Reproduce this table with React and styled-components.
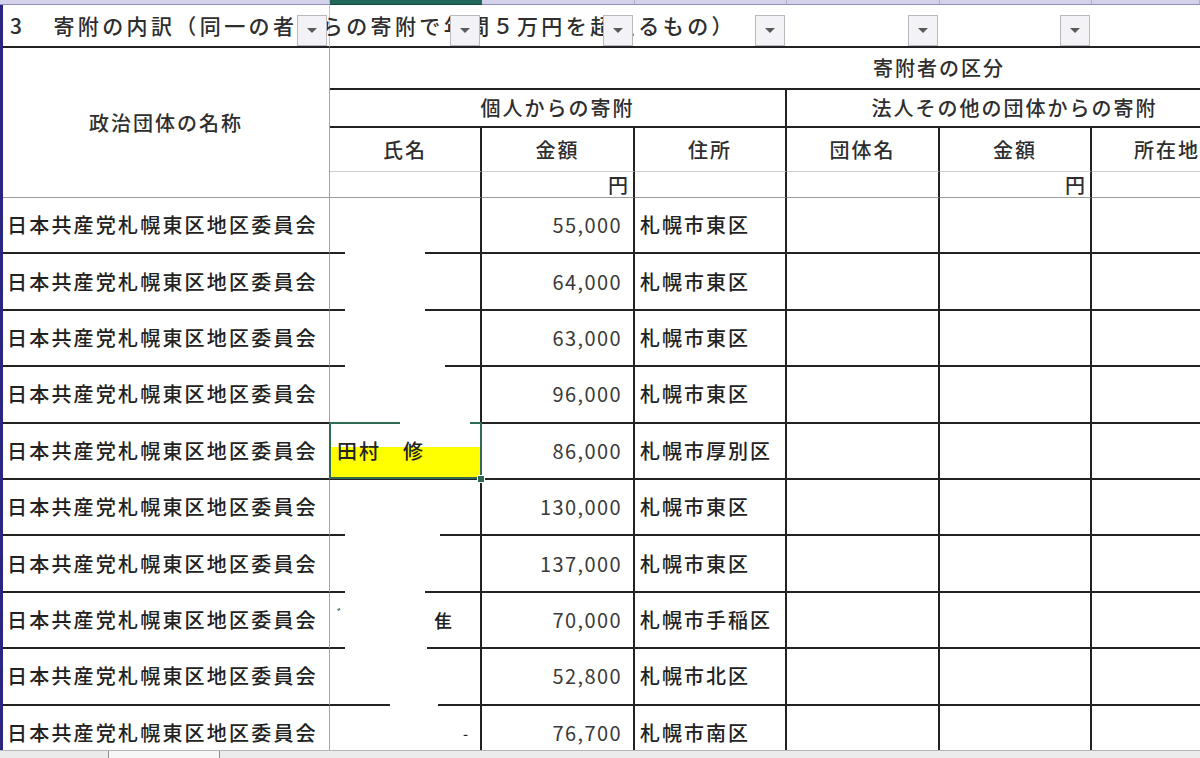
import styled, { createGlobalStyle } from "styled-components";

const GlobalStyle = createGlobalStyle`
  html, body { margin: 0; padding: 0; background: #fff; overflow: hidden; }
  body { font-family: "Noto Sans CJK JP", "Noto Sans", sans-serif; color: #2a2a2a; }
`;

// column widths (first one sits after the 3px frame line)
const COLS = [327, 152, 153, 152, 153, 152, 152, 152, 152];
const STRIP = [330, 152, 153, 152, 153, 152, 108];

const rows = [
  { amt: "55,000", addr: "札幌市東区", erase: [15, 80] },
  { amt: "64,000", addr: "札幌市東区", erase: [15, 80] },
  { amt: "63,000", addr: "札幌市東区", erase: [15, 100] },
  { amt: "96,000", addr: "札幌市東区" },
  { amt: "86,000", addr: "札幌市厚別区", selected: true, name: "田村　修" },
  { amt: "130,000", addr: "札幌市東区", erase: [15, 95] },
  { amt: "137,000", addr: "札幌市東区", erase: [15, 80] },
  { amt: "70,000", addr: "札幌市手稲区", erase: [15, 82], frag: true },
  { amt: "52,800", addr: "札幌市北区", erase: [60, 48] },
  { amt: "76,700", addr: "札幌市南区", dash: true },
];

export default function App() {
  return (
    <>
      <GlobalStyle />
      <Page>
        <ColStrip>
          {STRIP.map((w, i) => (
            <StripCell key={i} $w={w} $active={i === 1} />
          ))}
        </ColStrip>
        <Sheet>
          <Grid>
            <colgroup>
              {COLS.map((w, i) => (
                <col key={i} style={{ width: w }} />
              ))}
            </colgroup>
            <tbody>
              <tr style={{ height: 43 }}>
                <TitleCell>
                  <TitleText>
                    <Num>3</Num>寄附の内訳（同一の者からの寄附で年間５万円を超えるもの）
                  </TitleText>
                  <Filter />
                </TitleCell>
                {[0, 1, 2, 3, 4].map((i) => (
                  <FilterCell key={i}>
                    <Filter />
                  </FilterCell>
                ))}
                <FilterCell />
                <FilterCell />
                <FilterCell />
              </tr>

              <tr style={{ height: 42 }}>
                <Head rowSpan={4} $rb="1px solid #a4a4a4" $bb="1px solid #9c9c9c">
                  政治団体の名称
                </Head>
                <Head colSpan={8} $rb="none" $bb="2px solid #222">
                  寄附者の区分
                </Head>
              </tr>
              <tr style={{ height: 38 }}>
                <Head colSpan={3} $bb="2px solid #222">個人からの寄附</Head>
                <Head colSpan={3} $bb="2px solid #222">法人その他の団体からの寄附</Head>
                <Head colSpan={2} $rb="none" $bb="2px solid #222" />
              </tr>
              <tr style={{ height: 44 }}>
                {["氏名", "金額", "住所", "団体名", "金額", "所在地", "", ""].map((t, i) => (
                  <Head key={i} $bb="1px solid #cfcfcf">{t}</Head>
                ))}
              </tr>
              <tr style={{ height: 26 }}>
                {["", "円", "", "", "円", "", "", ""].map((t, i) => (
                  <Unit key={i}>{t}</Unit>
                ))}
              </tr>

              {rows.map((r, i) => (
                <tr key={i} style={{ height: 56.4 }}>
                  <OrgCell>日本共産党札幌東区地区委員会</OrgCell>
                  <NameCell $selected={r.selected}>
                    {r.name}
                    {r.frag && (
                      <FragRow>
                        <Tick>ﾞ</Tick>
                        <span>隹</span>
                      </FragRow>
                    )}
                    {r.dash && <Dash>-</Dash>}
                    {r.erase && <Erase $x={r.erase[0]} $w={r.erase[1]} $y={52} $h={7} />}
                    {r.selected && (
                      <>
                        <Erase $x={70} $w={70} $y={-3} $h={5} />
                        <Handle />
                      </>
                    )}
                  </NameCell>
                  <Amount>{r.amt}</Amount>
                  <Addr>{r.addr}</Addr>
                  <Blank />
                  <Blank />
                  <Blank />
                  <Blank />
                  <Blank />
                </tr>
              ))}
            </tbody>
          </Grid>
        </Sheet>
        <BottomBar>
          <Tab $w={108} />
          <TabGap />
          <TabRest />
        </BottomBar>
      </Page>
    </>
  );
}

const Page = styled.div`
  width: 1200px;
  height: 758px;
  display: flex;
  flex-direction: column;
  overflow: hidden;
`;

const ColStrip = styled.div`
  display: flex;
  height: 5px;
  flex: none;
`;

const StripCell = styled.div`
  flex: 0 0 ${(p) => p.$w}px;
  box-sizing: border-box;
  background: ${(p) => (p.$active ? "#21675a" : "#d4d2ea")};
  border-right: 1px solid ${(p) => (p.$active ? "#21675a" : "#aeacd2")};
  border-bottom: 1px solid ${(p) => (p.$active ? "#16463c" : "#8f8dbd")};
`;

const Sheet = styled.div`
  flex: 1;
  overflow: hidden;
  border-left: 3px solid #2a2680;
`;

const Grid = styled.table`
  border-collapse: separate;
  border-spacing: 0;
  table-layout: fixed;
  width: ${COLS.reduce((a, b) => a + b, 0)}px;
  font-size: 20px;
  font-weight: 500;
  line-height: 22px;
  letter-spacing: 2px;

  td {
    padding: 0;
    box-sizing: border-box;
    white-space: nowrap;
  }
`;

const TitleCell = styled.td`
  position: relative;
  overflow: visible;
  border-right: 1px solid #c4c4c4;
  border-bottom: 2px solid #222;
  vertical-align: middle;
`;

const TitleText = styled.span`
  position: relative;
  z-index: 1;
  display: inline-block;
  padding-left: 7px;
  font-size: 21px;
  letter-spacing: 3.4px;
  color: #2e2e2e;
`;

const Num = styled.span`
  margin-right: 28px;
`;

const FilterCell = styled.td`
  position: relative;
  border-bottom: 2px solid #222;
`;

const Filter = styled.div`
  position: absolute;
  z-index: 2;
  right: 2px;
  top: 10px;
  width: 30px;
  height: 31px;
  box-sizing: border-box;
  border: 1px solid #b9b9c2;
  background: #f3f3f7;

  &::after {
    content: "";
    position: absolute;
    left: 9px;
    top: 12px;
    border-left: 5px solid transparent;
    border-right: 5px solid transparent;
    border-top: 5px solid #5a5a5a;
  }
`;

const Head = styled.td`
  text-align: center;
  vertical-align: middle;
  overflow: hidden;
  color: #2e2e2e;
  border-right: ${(p) => p.$rb || "2px solid #222"};
  border-bottom: ${(p) => p.$bb || "none"};
`;

const Unit = styled.td`
  text-align: right;
  vertical-align: middle;
  padding-right: 3px !important;
  color: #2e2e2e;
  border-right: 2px solid #222;
  border-bottom: 1px solid #9c9c9c;
`;

const OrgCell = styled.td`
  padding-left: 4px !important;
  vertical-align: middle;
  overflow: hidden;
  color: #222;
  letter-spacing: 2.2px;
  border-right: 1px solid #a4a4a4;
  border-bottom: 2px solid #222;
`;

const NameCell = styled.td`
  position: relative;
  vertical-align: middle;
  padding-left: 7px !important;
  color: #222;
  border-right: 2px solid #222;
  border-bottom: 2px solid #222;
  background: ${(p) =>
    p.$selected ? "linear-gradient(#fff 0 23px, #ffff00 23px)" : "transparent"};

  ${(p) =>
    p.$selected &&
    `&::before {
      content: "";
      position: absolute;
      z-index: 1;
      inset: -2px -2px -1px -1px;
      border: 2px solid #2e6b52;
    }`}
`;

const Erase = styled.span`
  position: absolute;
  z-index: 2;
  left: ${(p) => p.$x}px;
  top: ${(p) => p.$y}px;
  width: ${(p) => p.$w}px;
  height: ${(p) => p.$h}px;
  background: #fff;
`;

const Handle = styled.span`
  position: absolute;
  z-index: 3;
  right: -5px;
  bottom: -5px;
  width: 6px;
  height: 6px;
  background: #2e6b52;
  border: 1px solid #fff;
`;

const FragRow = styled.span`
  display: flex;
  justify-content: space-between;
  align-items: center;
  padding-right: 26px;
  font-size: 18px;
`;

const Tick = styled.span`
  font-size: 12px;
  margin-top: -12px;
`;

const Dash = styled.span`
  display: block;
  text-align: right;
  padding-right: 10px;
  font-size: 14px;
`;

const Amount = styled.td`
  text-align: right;
  vertical-align: middle;
  padding-right: 11px !important;
  letter-spacing: 1.4px;
  font-weight: 400;
  color: #3a3a3a;
  border-right: 2px solid #222;
  border-bottom: 2px solid #222;
`;

const Addr = styled.td`
  vertical-align: middle;
  padding-left: 5px !important;
  color: #222;
  overflow: hidden;
  border-right: 2px solid #222;
  border-bottom: 2px solid #222;
`;

const Blank = styled.td`
  border-right: 2px solid #222;
  border-bottom: 2px solid #222;
`;

const BottomBar = styled.div`
  flex: none;
  height: 7px;
  display: flex;
  background: #e6e6e6;
  border-top: 1px solid #b4b4b4;
`;

const Tab = styled.div`
  flex: 0 0 ${(p) => p.$w}px;
  border-right: 1px solid #8e8e8e;
  background: #ebebeb;
`;

const TabGap = styled.div`
  flex: 0 0 110px;
  background: #f7f7f7;
`;

const TabRest = styled.div`
  flex: 1;
  border-left: 1px solid #8e8e8e;
  background: #ececec;
`;
